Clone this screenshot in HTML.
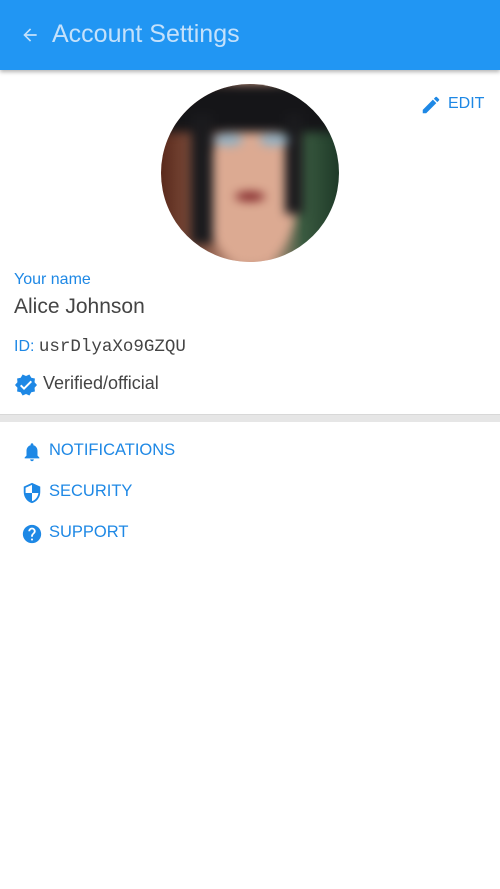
<!DOCTYPE html>
<html><head><meta charset="utf-8"><style>
*{margin:0;padding:0;box-sizing:border-box}
body{width:500px;height:889px;background:#fff;font-family:"Liberation Sans",sans-serif;position:relative;overflow:hidden}
.hdr{position:absolute;left:0;top:0;width:500px;height:70px;background:#2196F3;box-shadow:0 2px 4px rgba(0,0,0,.3)}
.hdr .t{position:absolute;left:52px;top:20px;font-size:25px;color:#c4e1fb}
.abs{position:absolute}
.blue{color:#1e88e5}
.av{position:absolute;left:161px;top:84px;width:178px;height:178px;border-radius:50%;overflow:hidden;
background:linear-gradient(90deg,#5a2a1c 0%,#8a5a48 25%,#c99a85 45%,#c99a85 60%,#3a5a40 80%,#1e3a28 100%)}
.av .in{position:absolute;left:0;top:0;width:178px;height:178px;filter:blur(5px)}
.menu{position:absolute;left:49px;font-size:16.5px;color:#1e88e5}
</style></head><body>
<div class="hdr">
<svg class="abs" style="left:20px;top:25px" width="20" height="20" viewBox="0 0 24 24"><path d="M20 11H7.8l5.6-5.6L12 4l-8 8 8 8 1.4-1.4L7.8 13H20z" fill="#c4e1fb"/></svg>
<div class="t">Account Settings</div>
</div>
<div class="av"><div class="in">
<div class="abs" style="left:45px;top:40px;width:90px;height:140px;border-radius:45%;background:#dcaa92"></div>
<div class="abs" style="left:0;top:0;width:178px;height:48px;background:#151518"></div>
<div class="abs" style="left:30px;top:30px;width:22px;height:130px;background:#1a1a1d"></div>
<div class="abs" style="left:124px;top:30px;width:18px;height:100px;background:#1a1a1d"></div>
<div class="abs" style="left:52px;top:50px;width:30px;height:12px;border-radius:50%;background:#8fb0c4"></div>
<div class="abs" style="left:98px;top:50px;width:30px;height:12px;border-radius:50%;background:#8fb0c4"></div>
<div class="abs" style="left:74px;top:108px;width:30px;height:9px;border-radius:50%;background:#7a1a20"></div>
</div></div>
<svg class="abs" style="left:420px;top:94px" width="22" height="22" viewBox="0 0 24 24"><path d="M3 17.25V21h3.75L17.8 9.94l-3.75-3.75L3 17.25zM20.7 7.04a1 1 0 000-1.41l-2.34-2.34a1 1 0 00-1.41 0l-1.83 1.83 3.75 3.75 1.83-1.83z" fill="#1e88e5"/></svg>
<div class="abs blue" style="left:448px;top:95px;font-size:16px">EDIT</div>
<div class="abs blue" style="left:14px;top:271px;font-size:16px">Your name</div>
<div class="abs" style="left:14px;top:295px;font-size:21px;color:#444">Alice Johnson</div>
<div class="abs" style="left:14px;top:337px;font-size:16px"><span class="blue">ID:</span> <span style="font-family:'Liberation Mono',monospace;color:#444;font-size:17.5px">usrDlyaXo9GZQU</span></div>
<svg class="abs" style="left:14px;top:373px" width="24" height="24" viewBox="0 0 24 24"><path d="M23 12l-2.44-2.79.34-3.69-3.61-.82-1.89-3.2L12 2.96 8.6 1.5 6.71 4.69 3.1 5.5l.34 3.7L1 12l2.44 2.79-.34 3.7 3.61.82L8.6 22.5l3.4-1.47 3.4 1.46 1.89-3.19 3.61-.82-.34-3.69L23 12z" fill="#1e88e5"/><path d="M10 17l-4-4 1.4-1.4 2.6 2.6 6.6-6.6L18 9z" fill="#fff"/></svg>
<div class="abs" style="left:43px;top:373px;font-size:18px;color:#444">Verified/official</div>
<div class="abs" style="left:0;top:414px;width:500px;height:8px;background:#e6e6e6;border-top:1px solid #d8d8d8"></div>
<svg class="abs" style="left:21px;top:441px" width="22" height="22" viewBox="0 0 24 24"><path d="M12 22c1.1 0 2-.9 2-2h-4c0 1.1.9 2 2 2zm6-6v-5c0-3.070-1.64-5.64-4.5-6.32V4c0-.83-.67-1.5-1.5-1.5s-1.5.67-1.5 1.5v.68C7.63 5.36 6 7.92 6 11v5l-2 2v1h16v-1l-2-2z" fill="#1e88e5"/></svg>
<div class="menu" style="top:441px">NOTIFICATIONS</div>
<svg class="abs" style="left:21px;top:482px" width="22" height="22" viewBox="0 0 24 24"><path d="M12 1L3 5v6c0 5.55 3.84 10.74 9 12 5.16-1.26 9-6.45 9-12V5l-9-4zm0 10.99h7c-.53 4.12-3.28 7.790-7 8.94V12H5V6.3l7-3.11v8.8z" fill="#1e88e5"/></svg>
<div class="menu" style="top:482px">SECURITY</div>
<svg class="abs" style="left:21px;top:523px" width="22" height="22" viewBox="0 0 24 24"><path d="M12 2C6.48 2 2 6.48 2 12s4.48 10 10 10 10-4.48 10-10S17.52 2 12 2zm1 17h-2v-2h2v2zm2.07-7.75l-.9.92C13.45 12.9 13 13.5 13 15h-2v-.5c0-1.1.45-2.1 1.170-2.83l1.24-1.26c.37-.36.59-.86.59-1.41 0-1.1-.9-2-2-2s-2 .9-2 2H8c0-2.21 1.79-4 4-4s4 1.79 4 4c0 .88-.36 1.68-.93 2.25z" fill="#1e88e5"/></svg>
<div class="menu" style="top:523px">SUPPORT</div>
</body></html>
